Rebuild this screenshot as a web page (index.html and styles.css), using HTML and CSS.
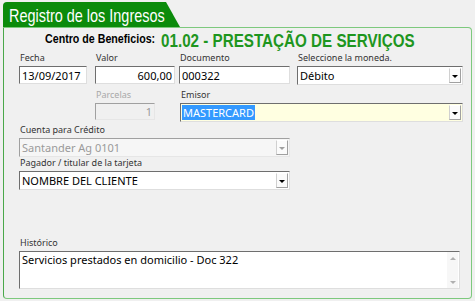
FILE: index.html
```html
<!DOCTYPE html>
<html>
<head>
    <title>Registro de los Ingresos</title>
    <meta charset="UTF-8">
    <link rel="stylesheet" href="styles.css">
</head>
<body>
  <div class="window">
    <div class="tab"><span class="narrow">Registro de los Ingresos</span></div>
    <div class="panel">
      <div class="title">
        <div class="centro"><span class="narrow">Centro de Beneficios:</span></div>
        <div class="codigo"><span class="narrow">01.02 - PRESTAÇÃO DE SERVIÇOS</span></div>
      </div>

      <div class="row row-1">
        <div class="field">
          <label>Fecha</label>
          <div class="ctl w-fecha">13/09/2017</div>
        </div>
        <div class="field">
          <label>Valor</label>
          <div class="ctl w-valor num">600,00</div>
        </div>
        <div class="field">
          <label>Documento</label>
          <div class="ctl w-doc">000322</div>
        </div>
        <div class="field">
          <label>Seleccione la moneda.</label>
          <div class="ctl combo w-moneda">Débito<span class="drop"></span></div>
        </div>
      </div>

      <div class="row row-2">
        <div class="field col-2">
          <label class="off">Parcelas</label>
          <div class="ctl disabled num w-parcelas">1</div>
        </div>
        <div class="field emisor">
          <label>Emisor</label>
          <div class="ctl combo focus w-emisor"><span class="sel">MASTERCARD</span><span class="drop"></span></div>
        </div>
      </div>

      <div class="row row-3">
        <div class="field wide">
          <label>Cuenta para Crédito</label>
          <div class="ctl combo disabled w-cuenta">Santander Ag 0101<span class="drop"></span></div>
        </div>
      </div>

      <div class="row row-4">
        <div class="field wide">
          <label>Pagador / titular de la tarjeta</label>
          <div class="ctl combo w-cuenta">NOMBRE DEL CLIENTE<span class="drop"></span></div>
        </div>
      </div>

      <div class="row row-5">
        <div class="field full">
          <label>Histórico</label>
          <div class="ctl memo">
            <span class="memo-text">Servicios prestados en domicilio - Doc 322</span>
            <span class="scroll"><i class="up"></i><i class="down"></i></span>
          </div>
        </div>
      </div>
    </div>
  </div>
</body>
</html>
```

FILE: styles.css
```css
body {
  margin: 0;
  background: #f0f0f0;
  font-family: "Noto Sans", sans-serif;
  color: #000;
}
.window {
  padding: 2px 3px 0 3px;
}
/* condensed look: Arial metrics squeezed horizontally */
.narrow {
  display: inline-block;
  white-space: nowrap;
  font-family: "Liberation Sans", Arial, sans-serif;
  transform-origin: left center;
}
.tab {
  width: 177px;
  height: 25px;
  box-sizing: border-box;
  padding-left: 6px;
  background: #0b8b0b;
  color: #ffffff;
  border-top-left-radius: 4px;
  clip-path: polygon(0 0, 163px 0, 100% 100%, 0 100%);
  font-size: 19px;
  line-height: 26px;
}
.tab .narrow {
  transform: scaleX(0.76);
}
.panel {
  border: 1px solid #7dc97d;
  border-left-color: #4aa84a;
  border-radius: 0 4px 4px 4px;
  padding: 0 0 9px 15px;
}
.title {
  display: flex;
  align-items: flex-start;
  height: 24px;
  padding-left: 26px;
  font-weight: bold;
}
.centro {
  width: 116px;
  margin-top: 3px;
  font-size: 13px;
  line-height: 14px;
}
.centro .narrow {
  transform: scaleX(0.82);
}
.codigo {
  color: #1e961e;
  font-size: 19px;
  line-height: 24px;
}
.codigo .narrow {
  transform: scaleX(0.8);
}
.row {
  display: grid;
  grid-template-columns: 76px 84px 118px 166px;
  align-items: start;
}
.row-2 { margin-top: 4px; }
.row-3 { margin-top: 2px; }
.row-5 { margin-top: 47px; }
.field {
  display: flex;
  flex-direction: column;
}
.col-2 { grid-column: 2; }
.emisor { grid-column: 3 / span 2; margin-left: 1px; }
.wide { grid-column: 1 / span 3; }
.full { grid-column: 1 / span 4; }
label {
  height: 11px;
  margin-bottom: 3px;
  padding-left: 1px;
  font-size: 9px;
  line-height: 11px;
  color: #333;
  white-space: nowrap;
}
label.off {
  color: #a8a8a8;
}
.ctl {
  display: flex;
  align-items: center;
  box-sizing: border-box;
  height: 18px;
  padding: 0 1px 0 2px;
  border: 1px solid;
  border-color: #6e6e6e #dedede #dedede #6e6e6e;
  background: #ffffff;
  font-size: 11px;
  white-space: nowrap;
}
.num {
  justify-content: flex-end;
  padding-right: 2px;
}
.w-fecha { width: 68px; }
.w-valor { width: 80px; }
.w-doc { width: 111px; }
.w-moneda { width: 166px; height: 19px; }
.w-parcelas { width: 60px; height: 17px; }
.w-emisor { width: 283px; height: 19px; }
.w-cuenta { width: 271px; height: 19px; }
.combo {
  padding-right: 1px;
}
.drop {
  display: flex;
  align-items: center;
  justify-content: center;
  margin-left: auto;
  width: 12px;
  height: 15px;
  box-sizing: border-box;
  border: 1px solid;
  border-color: #ffffff #a0a0a0 #a0a0a0 #d0d0d0;
  background: #fbfbfb;
}
.drop::after {
  content: "";
  border-left: 3px solid transparent;
  border-right: 3px solid transparent;
  border-top: 3px solid #000;
  margin-top: 2px;
}
.focus {
  background: #ffffe1;
  padding-left: 1px;
}
.sel {
  background: #3399ff;
  color: #ffffff;
  padding: 0 1px;
}
.disabled {
  background: #f0f0f0;
  color: #9a9a9a;
  border-color: #a0a0a0 #e6e6e6 #e6e6e6 #a0a0a0;
}
.w-cuenta.disabled {
  background: #f6f6f6;
}
.disabled .drop::after {
  border-top-color: #a0a0a0;
}
.memo {
  width: 441px;
  height: 38px;
  align-items: stretch;
  padding: 0 1px 0 2px;
}
.memo-text {
  flex: 1;
  padding-top: 1px;
  line-height: 14px;
}
.scroll {
  display: flex;
  flex-direction: column;
  justify-content: space-between;
  align-items: center;
  width: 11px;
  padding: 5px 0 4px;
  background: #f7f7f7;
}
.scroll i {
  border-left: 3px solid transparent;
  border-right: 3px solid transparent;
}
.scroll .up {
  border-bottom: 3px solid #b0b0b0;
}
.scroll .down {
  border-top: 3px solid #b0b0b0;
}
```
